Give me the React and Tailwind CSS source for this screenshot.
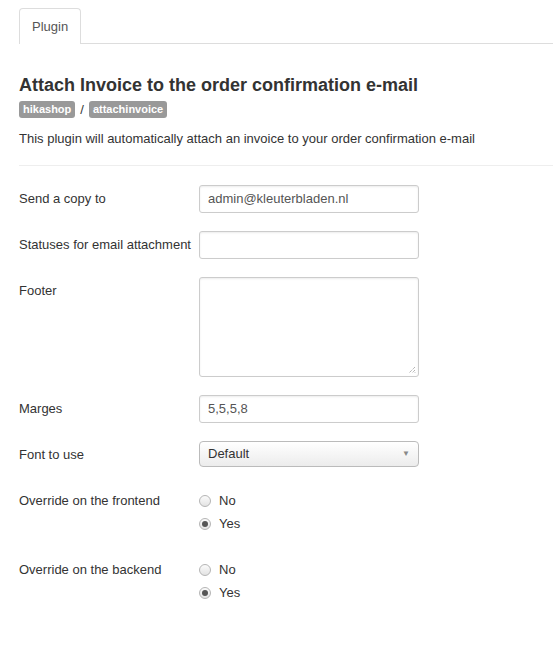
import React from 'react';

const font = { fontFamily: '"Liberation Sans", Arial, sans-serif' };

const Radio = ({ checked, label }) => (
  <label className="flex items-center h-[23px] text-[13px] text-[#333]">
    <span className="w-[12px] h-[12px] rounded-full border border-[#b5b5b5] bg-gradient-to-b from-[#fbfbfb] to-[#e3e3e3] flex items-center justify-center mr-[8px]">
      {checked && <span className="w-[6px] h-[6px] rounded-full bg-[#555]" />}
    </span>
    {label}
  </label>
);

const Row = ({ label, children, className = '' }) => (
  <div className={`flex items-start ${className}`}>
    <div className="w-[180px] text-[13px] text-[#333] pt-[6px] leading-[16px]">{label}</div>
    <div>{children}</div>
  </div>
);

const inputCls =
  'w-[220px] h-[28px] border border-[#ccc] rounded-[3px] bg-white px-[8px] text-[13px] text-[#555] flex items-center shadow-[inset_0_1px_2px_rgba(0,0,0,0.08)]';

export default function App() {
  return (
    <div className="min-h-[670px] bg-white text-[#333]" style={font}>
      {/* Tabs */}
      <div className="pt-[8px] ml-[19px] border-b border-[#ddd] flex">
        <div className="h-[36px] px-[12px] border border-b-0 border-[#ddd] rounded-t-[4px] bg-white -mb-px flex items-center text-[13px] text-[#555]">
          Plugin
        </div>
      </div>

      <div className="px-[19px]">
        <h1 className="text-[18px] font-bold text-[#333] mt-[30px] leading-[22px]">
          Attach Invoice to the order confirmation e-mail
        </h1>
        <div className="flex items-center mt-[4px] text-[11px]">
          <span className="bg-[#999] text-white font-bold px-[4px] h-[17px] leading-[17px] rounded-[3px]">hikashop</span>
          <span className="mx-[5px] text-[#333] text-[13px]">/</span>
          <span className="bg-[#999] text-white font-bold px-[4px] h-[17px] leading-[17px] rounded-[3px]">attachinvoice</span>
        </div>
        <p className="text-[13px] mt-[10px] leading-[18px]">
          This plugin will automatically attach an invoice to your order confirmation e-mail
        </p>
      </div>

      <div className="ml-[19px] mt-[17px] border-t border-[#eee]" />

      <div className="px-[19px] pt-[19px]">
        <Row label="Send a copy to">
          <div className={inputCls}>admin@kleuterbladen.nl</div>
        </Row>
        <Row label="Statuses for email attachment" className="mt-[18px]">
          <div className={inputCls} />
        </Row>
        <Row label="Footer" className="mt-[18px]">
          <div className="relative w-[220px] h-[100px] border border-[#ccc] rounded-[3px] bg-white shadow-[inset_0_1px_2px_rgba(0,0,0,0.08)]">
            <svg className="absolute right-[2px] bottom-[2px]" width="8" height="8" viewBox="0 0 8 8">
              <path d="M7 1 L1 7 M7 4 L4 7 M7 6.5 L6.5 7" stroke="#777" strokeWidth="0.8" strokeDasharray="1 1" />
            </svg>
          </div>
        </Row>
        <Row label="Marges" className="mt-[18px]">
          <div className={inputCls}>5,5,5,8</div>
        </Row>
        <Row label="Font to use" className="mt-[18px]">
          <div className="w-[220px] h-[26px] border border-[#bbb] rounded-[4px] bg-gradient-to-b from-white to-[#ececec] px-[8px] flex items-center justify-between text-[13px] text-[#333]">
            <span>Default</span>
            <span className="text-[8px] text-[#888]">▼</span>
          </div>
        </Row>
        <Row label="Override on the frontend" className="mt-[20px]">
          <div className="pt-[3px]">
            <Radio label="No" />
            <Radio label="Yes" checked />
          </div>
        </Row>
        <Row label="Override on the backend" className="mt-[20px]">
          <div className="pt-[3px]">
            <Radio label="No" />
            <Radio label="Yes" checked />
          </div>
        </Row>
      </div>
    </div>
  );
}
